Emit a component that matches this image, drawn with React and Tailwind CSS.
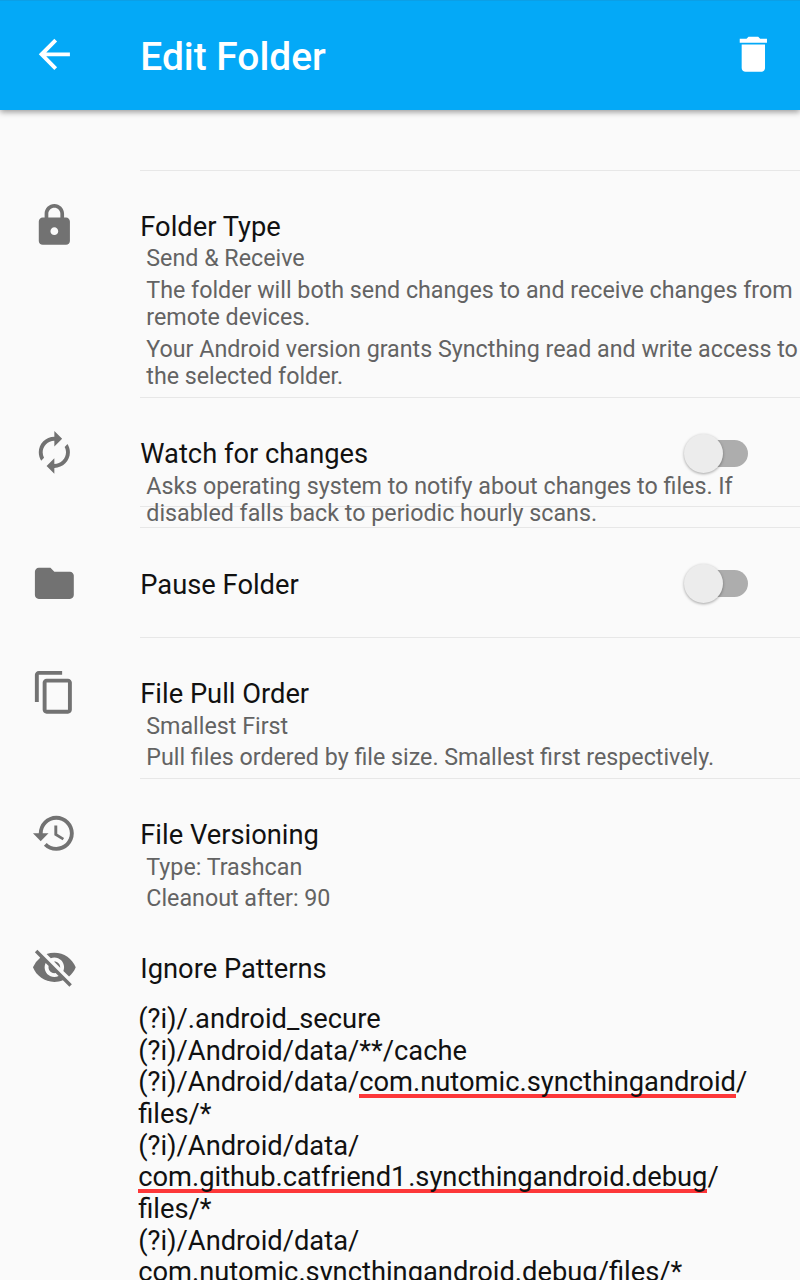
import { MdArrowBack, MdDelete, MdLock, MdAutorenew, MdFolder, MdContentCopy, MdHistory, MdVisibilityOff } from "react-icons/md";

function Switch() {
  return (
    <span role="switch" aria-checked="false" className="mt-[3px] mr-[52px] flex h-10 w-[65px] shrink-0 items-center">
      <span className="ml-2.5 flex h-[27px] w-[55px] items-center rounded-full bg-[#adadad]">
        <span className="-ml-[9px] size-[39px] shrink-0 rounded-full bg-[#ececec] shadow-[0_1px_3px_rgba(0,0,0,0.35)]" />
      </span>
    </span>
  );
}

function Item({ icon: Icon, title, details = [], toggle, className }) {
  return (
    <section className={`z-[1] flex shrink-0 pl-[31px] ${className}`}>
      <Icon className="size-[46.7px] shrink-0 text-[#727272]" />
      <div className="ml-[62.6px] flex min-w-0 flex-1 flex-col pt-[9px]">
        <div className="flex h-8 justify-between">
          <h2 className="text-[27.3px] leading-8 whitespace-nowrap text-[#111]">{title}</h2>
          {toggle && <div className="-mt-2"><Switch /></div>}
        </div>
        <div className="mt-[2.6px] ml-[6px] flex flex-col gap-[4.3px]">
          {details.map((text) => (
            <p key={text} className="text-[23.25px] leading-[27.4px] whitespace-pre text-[#636363]">{text}</p>
          ))}
        </div>
      </div>
    </section>
  );
}

function Misspelled({ children }) {
  return <span className="bg-[linear-gradient(#fd3739,#fd3739)] bg-[length:100%_4px] bg-[position:0_28px] bg-no-repeat">{children}</span>;
}

export default function App() {
  return (
    <div className="flex h-[1280px] w-[800px] flex-col overflow-hidden bg-[#fafafa] font-[Roboto,sans-serif]">
      <header className="z-10 flex h-[109.5px] shrink-0 items-center border-t border-[#0c9fe6] bg-[#04a9f7] pr-[23px] pl-[31px] text-white shadow-[0_2px_6px_rgba(0,0,0,0.4)]">
        <MdArrowBack className="mb-px size-[46.7px]" />
        <h1 className="ml-[62.6px] flex-1 pt-[3px] text-[38.9px] leading-[46px] font-medium">Edit Folder</h1>
        <MdDelete className="mb-px size-[46.7px]" />
      </header>
      <main className="flex flex-1 flex-col">
        <div className="ml-[140px] h-[61.5px] shrink-0 border-b border-[#e7e7e7]" />
        <Item className="h-[226px] pt-[30.5px]" icon={MdLock} title="Folder Type" details={[
          "Send & Receive",
          "The folder will both send changes to and receive changes from\nremote devices.",
          "Your Android version grants Syncthing read and write access to\nthe selected folder.",
        ]} />
        <hr className="ml-[140px] shrink-0 border-[#e7e7e7]" />
        <Item className="h-[108px] pt-[31.2px]" icon={MdAutorenew} title="Watch for changes" toggle details={[
          "Asks operating system to notify about changes to files. If\ndisabled falls back to periodic hourly scans.",
        ]} />
        <div className="ml-[140px] h-[22px] shrink-0 border-y border-[#e7e7e7]" />
        <Item className="h-[109px] pt-[31.6px]" icon={MdFolder} title="Pause Folder" toggle />
        <hr className="ml-[140px] shrink-0 border-[#e7e7e7]" />
        <Item className="h-[140px] pt-[31.2px]" icon={MdContentCopy} title="File Pull Order" details={[
          "Smallest First",
          "Pull files ordered by file size. Smallest first respectively.",
        ]} />
        <hr className="ml-[140px] shrink-0 border-[#e7e7e7]" />
        <Item className="h-[165px] pt-[31.2px]" icon={MdHistory} title="File Versioning" details={["Type: Trashcan", "Cleanout after: 90"]} />
        <Item className="h-[60px]" icon={MdVisibilityOff} title="Ignore Patterns" />
        <div className="ml-[138.2px] text-[27.3px] leading-[31.65px] whitespace-nowrap text-[#111]">
          <p>(?i)/.android_secure</p>
          <p>(?i)/Android/data/**/cache</p>
          <p>(?i)/Android/data/<Misspelled>com.nutomic.syncthingandroid</Misspelled>/<br />files/*</p>
          <p>(?i)/Android/data/<br /><Misspelled>com.github.catfriend<span className="tracking-[1.7px]">1</span>.syncthingandroid.debug</Misspelled>/<br />files/*</p>
          <p>(?i)/Android/data/<br />com.nutomic.syncthingandroid.debug/files/*</p>
        </div>
      </main>
    </div>
  );
}
